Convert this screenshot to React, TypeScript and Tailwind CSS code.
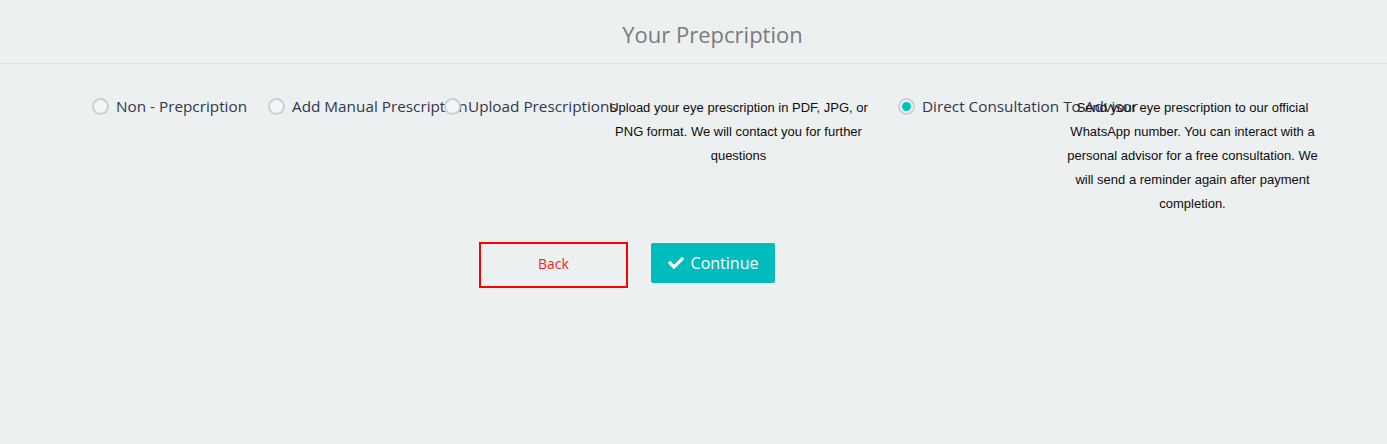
const options = [
  { label: "Non - Prepcription", checked: false },
  { label: "Add Manual Prescription", checked: false },
  {
    label: "Upload Prescriptions",
    checked: false,
    note: "Upload your eye prescription in PDF, JPG, or PNG format. We will contact you for further questions",
  },
  {
    label: "Direct Consultation To Advisor",
    checked: true,
    note: "Send your eye prescription to our official WhatsApp number. You can interact with a personal advisor for a free consultation. We will send a reminder again after payment completion.",
  },
];

function Radio({ checked }: { checked: boolean }) {
  return (
    <span className="flex h-[17px] w-[17px] shrink-0 items-center justify-center rounded-full border-2 border-[#cdd0d2] bg-[#f4f6f7]">
      {checked && <span className="h-[9px] w-[9px] rounded-full bg-[#00bfbf]" />}
    </span>
  );
}

export default function App() {
  return (
    <div className="min-h-[444px] bg-[#ecf0f1] font-['Open_Sans',sans-serif]">
      <div className="flex h-[64px] items-center justify-center border-b border-[#dde1e3] pl-[38px] pt-[5px]">
        <h1 className="text-[22px] text-[#7b7b7b]">Your Prepcription</h1>
      </div>

      <div className="flex items-start pl-[92px] pt-[31px]">
        {options.map((o, i) => (
          <div key={i} className={`flex items-start ${o.note ? "mr-[26px]" : "mr-[15px]"}`}>
            <label className="flex w-[161px] items-center gap-[7px] whitespace-nowrap text-[15.3px] text-[#33364a]">
              <Radio checked={o.checked} />
              <span>{o.label}</span>
            </label>
            {o.note && (
              <p className="w-[267px] pt-[1px] text-center font-['Liberation_Sans',sans-serif] text-[13px] leading-[24px] text-[#0d0d0d]">
                {o.note}
              </p>
            )}
          </div>
        ))}
      </div>

      <div className="flex items-start gap-[23px] pl-[479px] pt-[26px]">
        <button className="h-[46px] w-[149px] border-2 border-[#ff0000] pb-[3px] text-[14px] text-[#ff2020]">
          Back
        </button>
        <button className="mt-[1px] flex h-[40px] w-[124px] items-center justify-center gap-[7px] rounded-[2px] bg-[#00bdbd] text-[16px] text-white">
          <svg viewBox="0 0 512 512" className="h-[16px] w-[16px] fill-white">
            <path d="M173.898 439.404l-166.4-166.4c-9.997-9.997-9.997-26.206 0-36.204l36.203-36.204c9.997-9.998 26.207-9.998 36.204 0L192 312.69 432.095 72.596c9.997-9.997 26.207-9.997 36.204 0l36.203 36.204c9.997 9.997 9.997 26.206 0 36.204l-294.4 294.401c-9.998 9.997-26.207 9.997-36.204-.001z" />
          </svg>
          Continue
        </button>
      </div>
    </div>
  );
}
